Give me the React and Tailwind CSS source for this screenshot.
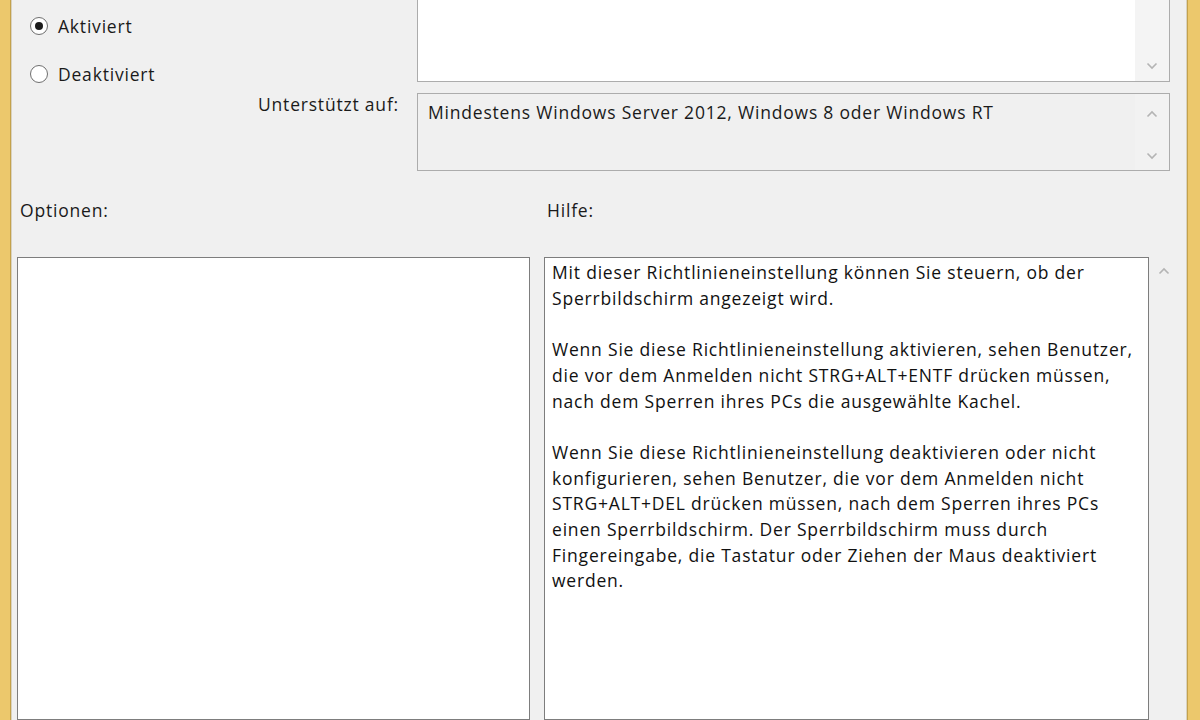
import React from "react";

const ChevronUp = () => (
  <svg width="12" height="8" viewBox="0 0 12 8" className="block">
    <polyline points="1.5,6.5 6,2 10.5,6.5" fill="none" stroke="#b4b4b4" strokeWidth="1.6" />
  </svg>
);

const ChevronDown = () => (
  <svg width="12" height="8" viewBox="0 0 12 8" className="block">
    <polyline points="1.5,1.5 6,6 10.5,1.5" fill="none" stroke="#b4b4b4" strokeWidth="1.6" />
  </svg>
);

const Radio = ({ checked, label }) => (
  <div className="flex items-center h-[26px]">
    <div className="w-[18px] h-[18px] rounded-full border border-[#6f6f6f] bg-white flex items-center justify-center">
      {checked && <div className="w-[8px] h-[8px] rounded-full bg-[#1c1c1c]" />}
    </div>
    <span className="ml-[10px]">{label}</span>
  </div>
);

const helpParagraphs = [
  [
    "Mit dieser Richtlinieneinstellung können Sie steuern, ob der",
    "Sperrbildschirm angezeigt wird.",
  ],
  [
    "Wenn Sie diese Richtlinieneinstellung aktivieren, sehen Benutzer,",
    "die vor dem Anmelden nicht STRG+ALT+ENTF drücken müssen,",
    "nach dem Sperren ihres PCs die ausgewählte Kachel.",
  ],
  [
    "Wenn Sie diese Richtlinieneinstellung deaktivieren oder nicht",
    "konfigurieren, sehen Benutzer, die vor dem Anmelden nicht",
    "STRG+ALT+DEL drücken müssen, nach dem Sperren ihres PCs",
    "einen Sperrbildschirm. Der Sperrbildschirm muss durch",
    "Fingereingabe, die Tastatur oder Ziehen der Maus deaktiviert",
    "werden.",
  ],
];

export default function App() {
  return (
    <div
      className="w-[1200px] h-[720px] flex overflow-hidden text-[17.5px] tracking-[0.8px] text-[#1a1a1a]"
      style={{ fontFamily: '"Open Sans", "Noto Sans", sans-serif' }}
    >
      {/* left frame */}
      <div className="w-[12px] shrink-0 flex">
        <div className="flex-1 bg-[#ecc86c]" />
        <div className="w-[1px] bg-[#c4a24c]" />
        <div className="w-[1px] bg-[#d9d2bf]" />
      </div>

      <div className="flex-1 bg-[#f0f0f0] flex flex-col">
        {/* top section */}
        <div className="flex">
          <div className="w-[246px] shrink-0 pl-[18px] pt-[13px] flex flex-col gap-[22px]">
            <Radio checked label="Aktiviert" />
            <Radio label="Deaktiviert" />
          </div>
          <div className="flex-1 flex flex-col">
            <div className="flex">
              <div className="w-[159px]" />
              <div className="w-[753px] h-[82px] border border-t-0 border-[#acacac] bg-white flex">
                <div className="flex-1" />
                <div className="w-[34px] bg-[#f4f4f4] flex flex-col items-center justify-end pb-[11px]">
                  <ChevronDown />
                </div>
              </div>
            </div>
            <div className="flex mt-[11px]">
              <div className="w-[159px]">
                <div className="leading-[22px]">Unterstützt auf:</div>
              </div>
              <div className="w-[753px] h-[78px] border border-[#acacac] bg-[#f0f0f0] flex">
                <div className="flex-1 pl-[10px] pt-[7px] leading-[22px] whitespace-nowrap">
                  Mindestens Windows Server 2012, Windows 8 oder Windows RT
                </div>
                <div className="w-[34px] bg-[#f2f2f2] flex flex-col items-center justify-between pt-[16px] pb-[10px]">
                  <ChevronUp />
                  <ChevronDown />
                </div>
              </div>
            </div>
          </div>
        </div>

        {/* labels */}
        <div className="flex mt-[28px] leading-[22px]">
          <div className="w-[535px] pl-[8px]">Optionen:</div>
          <div>Hilfe:</div>
        </div>

        {/* bottom panels */}
        <div className="flex mt-[36px] flex-1">
          <div className="ml-[5px] w-[513px] border border-[#7d7d7d] bg-white" />
          <div className="ml-[14px] w-[605px] border border-[#7d7d7d] bg-white pl-[7px] pt-[2px] leading-[25.7px] text-[#111]">
            {helpParagraphs.map((p, i) => (
              <div key={i} className={i > 0 ? "mt-[25.7px]" : ""}>
                {p.map((line, j) => (
                  <div key={j} className="whitespace-nowrap">{line}</div>
                ))}
              </div>
            ))}
          </div>
          <div className="w-[30px] flex justify-center pt-[10px]">
            <ChevronUp />
          </div>
        </div>
      </div>

      {/* right frame */}
      <div className="w-[14px] shrink-0 flex">
        <div className="w-[1px] bg-[#d9d2bf]" />
        <div className="w-[1px] bg-[#c4a24c]" />
        <div className="flex-1 bg-[#ecc86c]" />
      </div>
    </div>
  );
}
